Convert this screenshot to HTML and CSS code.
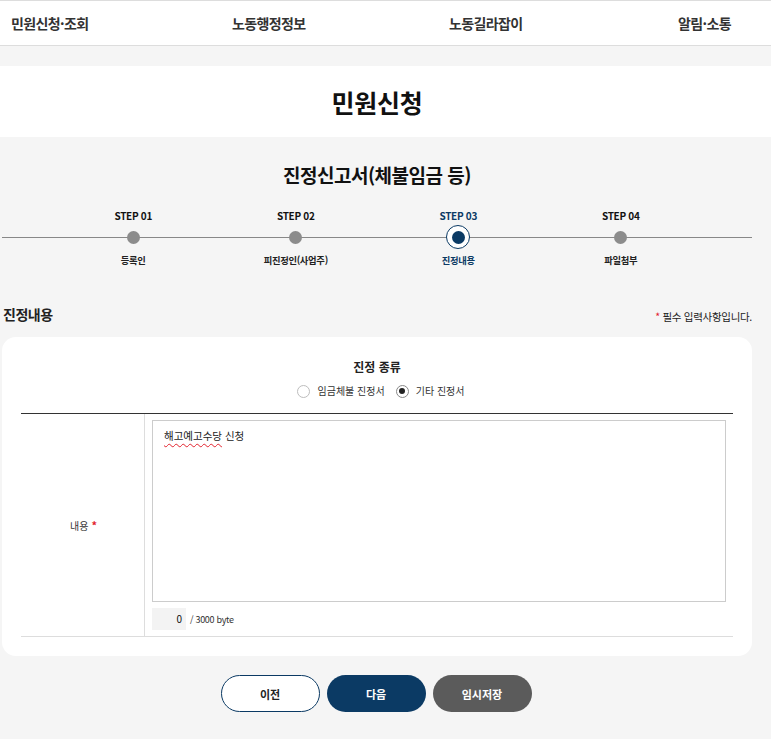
FILE: index.html
```html
<!DOCTYPE html>
<html lang="ko">
<head>
<meta charset="utf-8">
<title>민원신청</title>
<link rel="stylesheet" href="styles.css">
</head>
<body>
<nav class="gnb">
  <a href="#">민원신청·조회</a>
  <a href="#">노동행정정보</a>
  <a href="#">노동길라잡이</a>
  <a href="#">알림·소통</a>
</nav>
<div class="gap-band"></div>
<header class="title-band"><h1>민원신청</h1></header>

<main class="container">
  <h2 class="doc-title">진정신고서(체불임금 등)</h2>

  <div class="steps">
    <ol class="step-list">
      <li class="step"><span class="step-no">STEP 01</span><span class="dot-wrap"><span class="dot"></span></span><span class="step-name">등록인</span></li>
      <li class="step"><span class="step-no">STEP 02</span><span class="dot-wrap"><span class="dot"></span></span><span class="step-name">피진정인(사업주)</span></li>
      <li class="step active"><span class="step-no">STEP 03</span><span class="dot-wrap"><span class="dot"></span></span><span class="step-name">진정내용</span></li>
      <li class="step"><span class="step-no">STEP 04</span><span class="dot-wrap"><span class="dot"></span></span><span class="step-name">파일첨부</span></li>
    </ol>
  </div>

  <div class="sec-head">
    <h3>진정내용</h3>
    <p class="req-note"><span class="star">*</span> 필수 입력사항입니다.</p>
  </div>

  <section class="card">
    <div class="kind-title">진정 종류</div>
    <div class="kind-radios">
      <label class="radio"><input type="radio" name="kind"> 임금체불 진정서</label>
      <label class="radio"><input type="radio" name="kind" checked> 기타 진정서</label>
    </div>

    <div class="form-table">
      <div class="th">내용 <span class="star">*</span></div>
      <div class="td">
        <div class="textbox"><span class="misspell">해고예고수당</span> 신청</div>
        <div class="counter"><span class="count">0</span><span class="limit">/ 3000 byte</span></div>
      </div>
    </div>
  </section>

  <div class="btns">
    <button class="btn btn-prev">이전</button>
    <button class="btn btn-next">다음</button>
    <button class="btn btn-save">임시저장</button>
  </div>
</main>
</body>
</html>
```

FILE: styles.css
```css
* { box-sizing: border-box; }
html, body { margin: 0; padding: 0; }
body {
  background: #f5f5f5;
  font-family: "Noto Sans CJK KR", "Noto Sans", sans-serif;
  color: #222;
  min-height: 739px;
}
a { text-decoration: none; }
h1, h2, h3, p, ol { margin: 0; padding: 0; }
ol { list-style: none; }

.gnb {
  background: #fff;
  border-top: 1px solid #ddd;
  border-bottom: 1px solid #ddd;
  height: 46px;
  display: flex;
  justify-content: space-between;
  align-items: center;
  padding: 0 40px 0 11px;
}
.gnb a {
  font-size: 14px;
  font-weight: 700;
  color: #333;
  letter-spacing: -0.6px;
  line-height: 20px;
}
.gnb a:nth-child(2) { margin-left: -12px; }
.gnb a:nth-child(3) { margin-left: -12px; }

.gap-band { height: 20px; }

.title-band {
  background: #fff;
  height: 71px;
  display: flex;
  align-items: center;
  justify-content: center;
}
.title-band h1 {
  font-size: 25px;
  font-weight: 700;
  color: #111;
  letter-spacing: -0.3px;
  line-height: 30px;
  margin-left: -17px;
}

.container {
  width: 750px;
  margin-left: 2px;
}

.doc-title {
  text-align: center;
  font-size: 19px;
  font-weight: 700;
  color: #111;
  line-height: 24px;
  padding-top: 26px;
  letter-spacing: -0.5px;
}

.steps {
  position: relative;
  margin-top: 19px;
}
.steps::before {
  content: "";
  position: absolute;
  left: 0;
  right: 0;
  top: 31px;
  height: 1px;
  background: #888;
}
.step-list {
  position: relative;
  width: 650px;
  margin: 0 auto;
  display: grid;
  grid-template-columns: repeat(4, 1fr);
}
.step {
  display: flex;
  flex-direction: column;
  align-items: center;
}
.step-no {
  font-size: 10px;
  font-weight: 700;
  color: #111;
  line-height: 20px;
  letter-spacing: -0.3px;
}
.dot-wrap {
  height: 22px;
  display: flex;
  align-items: center;
  justify-content: center;
}
.dot {
  width: 13px;
  height: 13px;
  border-radius: 50%;
  background: #8c8c8c;
}
.step-name {
  margin-top: 2px;
  font-size: 9.3px;
  font-weight: 700;
  color: #222;
  line-height: 20px;
  letter-spacing: -0.3px;
}
.step.active .step-no,
.step.active .step-name { color: #0b3a64; }
.step.active .dot-wrap {
  width: 24px;
  height: 24px;
  margin: -1px 0;
  border-radius: 50%;
  border: 1.5px solid #0b3a64;
  background: #fff;
}
.step.active .dot {
  width: 13px;
  height: 13px;
  background: #0b3a64;
}

.sec-head {
  margin-top: 33px;
  display: flex;
  justify-content: space-between;
  align-items: flex-end;
}
.sec-head h3 {
  font-size: 14px;
  font-weight: 700;
  color: #222;
  line-height: 22px;
  letter-spacing: -0.5px;
  margin-left: 1px;
}
.req-note {
  font-size: 10.5px;
  color: #222;
  line-height: 16px;
  letter-spacing: -0.3px;
}
.star { color: #e2232e; }

.card {
  margin-top: 12px;
  background: #fff;
  border-radius: 14px;
  padding: 20px 19px 19px 19px;
}
.kind-title {
  text-align: center;
  font-size: 12px;
  font-weight: 700;
  color: #222;
  line-height: 20px;
}
.kind-radios {
  margin-top: 4px;
  display: flex;
  justify-content: center;
  gap: 11px;
  line-height: 20px;
  padding-left: 8px;
}
.radio {
  display: flex;
  align-items: center;
  gap: 7px;
  font-size: 10px;
  color: #333;
}
.radio input {
  appearance: none;
  -webkit-appearance: none;
  margin: 0;
  width: 13px;
  height: 13px;
  border-radius: 50%;
  border: 1px solid #bdbdbd;
  background: #fff;
  display: grid;
  place-items: center;
}
.radio input:checked { border-color: #888; }
.radio input:checked::after {
  content: "";
  width: 6px;
  height: 6px;
  border-radius: 50%;
  background: #222;
}

.form-table {
  margin-top: 12px;
  border-top: 1px solid #333;
  border-bottom: 1px solid #ddd;
  display: flex;
}
.th {
  width: 124px;
  flex: none;
  border-right: 1px solid #ddd;
  display: flex;
  align-items: center;
  justify-content: center;
  font-size: 10px;
  color: #333;
  padding-left: 2px;
  gap: 3px;
}
.th .star { font-weight: 700; font-size: 11px; }
.td {
  flex: 1;
  padding: 6px 7px 6px 7px;
}
.textbox {
  height: 182px;
  border: 1px solid #ccc;
  background: #fff;
  padding: 8px 11px;
  font-size: 10.5px;
  color: #222;
  line-height: 14px;
}
.misspell {
  text-decoration: underline wavy #e2232e;
  text-decoration-thickness: 1px;
  text-underline-offset: 3px;
}
.counter {
  margin-top: 6px;
  display: flex;
  align-items: center;
  height: 22px;
}
.count {
  width: 34px;
  height: 22px;
  background: #f3f3f3;
  text-align: right;
  padding-right: 4px;
  font-size: 10px;
  line-height: 22px;
  color: #111;
}
.limit {
  margin-left: 4px;
  font-size: 9px;
  color: #333;
  letter-spacing: -0.3px;
}

.btns {
  margin-top: 19px;
  display: flex;
  justify-content: center;
  gap: 7px;
  padding-right: 2px;
}
.btn {
  width: 99px;
  height: 37px;
  border-radius: 19px;
  font-family: "Noto Sans CJK KR", "Noto Sans", sans-serif;
  font-size: 11px;
  font-weight: 700;
  border: 1px solid transparent;
  cursor: pointer;
}
.btn-prev { background: #fff; border-color: #0b3a64; color: #222; }
.btn-next { background: #0b3a64; color: #fff; }
.btn-save { background: #5b5b5b; color: #fff; }
```
